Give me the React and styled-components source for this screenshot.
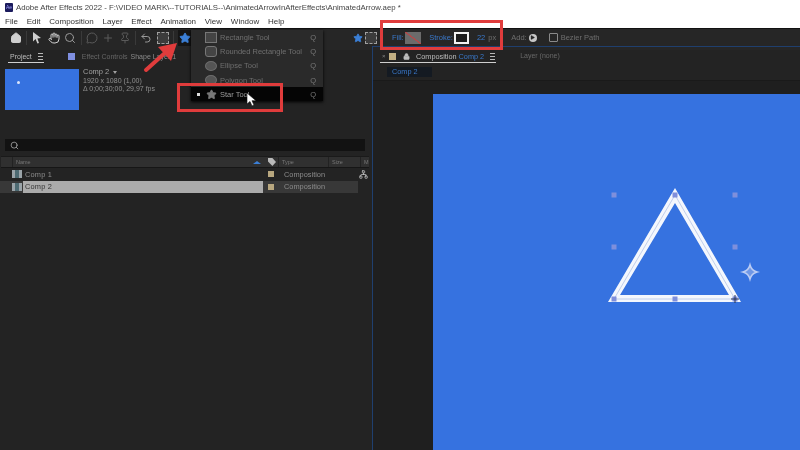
import React from 'react'
import styled, { createGlobalStyle } from 'styled-components'
import { Home, Hand, Search, Undo2, Plus, Pin, MessageCircle, Star, Play, Network, Lock } from 'lucide-react'

const GlobalStyle = createGlobalStyle`
  html, body { margin: 0; padding: 0; background: #232323; }
  body { font-family: "Liberation Sans", Arial, sans-serif; }
`

const Page = styled.div`
  position: relative;
  width: 800px;
  height: 450px;
  overflow: hidden;
  display: flex;
  flex-direction: column;
  background: #232323;
  filter: blur(0.35px);
`

const TitleBar = styled.div`
  height: 14px;
  background: #fff;
  display: flex;
  align-items: center;
  gap: 3px;
  padding-left: 5px;
  font-size: 7.8px;
  color: #444;
  white-space: nowrap;
`

const AppIcon = styled.div`
  width: 8px;
  height: 9px;
  border-radius: 1px;
  background: #1a1a5c;
  color: #a6a6ff;
  font-size: 5px;
  line-height: 9px;
  text-align: center;
`

const MenuBar = styled.div`
  height: 14px;
  background: #fff;
  display: flex;
  align-items: center;
  gap: 8.8px;
  padding-left: 5px;
  font-size: 8px;
  color: #333;
`

const Toolbar = styled.div`
  height: 22px;
  box-sizing: border-box;
  background: #262626;
  border-top: 1px solid #111;
  display: flex;
  align-items: center;
  padding: 0 0 4px 8px;
  color: #9a9a9a;
`

const ToolSlot = styled.div`
  width: ${(p) => p.$w || 16.5}px;
  flex: none;
  display: flex;
  justify-content: center;
  color: ${(p) => (p.$dim ? '#5a5a5a' : p.$light ? '#cfcfcf' : '#9a9a9a')};
`

const ToolSep = styled.div`
  width: 1px;
  height: 14px;
  flex: none;
  margin: 0 2px;
  background: #3a3a3a;
`

const ActiveTool = styled.div`
  width: 14px;
  height: 16px;
  flex: none;
  margin-left: 2px;
  background: #151515;
  display: flex;
  align-items: center;
  justify-content: center;
  color: #3b7fd6;
`

const DashBox = styled.div`
  width: 10px;
  height: 10px;
  border: 1px dashed #a0a0a0;
  background: #3c3c3c;
`

const ToolSpacer = styled.div`
  width: ${(p) => p.$w}px;
  flex: none;
`

const OptionLabel = styled.span`
  font-size: 7.5px;
  flex: none;
  color: ${(p) => (p.$blue ? '#3a78c9' : '#6e6e6e')};
  margin-left: ${(p) => p.$ml || 0}px;
`

const FillSwatch = styled.div`
  width: 16px;
  height: 12px;
  flex: none;
  margin-left: 1.5px;
  background: linear-gradient(to top right, #6b6b6b 46%, #b04a4a 48%, #b04a4a 53%, #6b6b6b 55%);
`

const StrokeSwatch = styled.div`
  width: 15px;
  height: 12px;
  flex: none;
  box-sizing: border-box;
  margin-left: 1px;
  border: 2.5px solid #f2f2f2;
  background: #1c1c1c;
`

const AddDot = styled.div`
  width: 8px;
  height: 8px;
  flex: none;
  margin-left: 2px;
  border-radius: 50%;
  background: #c8c8c8;
  display: flex;
  align-items: center;
  justify-content: center;
  color: #262626;
`

const CheckBox = styled.div`
  width: 9px;
  height: 9px;
  flex: none;
  margin-left: 12px;
  border: 1px solid #8a8a8a;
  border-radius: 1px;
  box-sizing: border-box;
`

const Main = styled.div`
  flex: 1;
  display: flex;
  min-height: 0;
`

const LeftPanel = styled.div`
  width: 372px;
  display: flex;
  flex-direction: column;
  flex: none;
`

const TabRow = styled.div`
  height: 14px;
  display: flex;
  align-items: flex-start;
  font-size: 7px;
`

const Tab = styled.div`
  height: 12px;
  display: flex;
  align-items: center;
  gap: 6px;
  padding: 0 1px 0 2px;
  color: #bdbdbd;
  border-bottom: 1px solid #cfcfcf;
`

const LeftTabRow = styled(TabRow)`
  padding-left: 8px;
`

const EffectTab = styled.div`
  display: flex;
  align-items: center;
  gap: 7px;
  height: 12px;
  margin-left: 24px;
  color: #666;
`

const BrightText = styled.span`
  color: #8a8a8a;
  margin-left: 1px;
`

const Bars = styled.div`
  width: 5px;
  height: 5px;
  flex: none;
  border-top: 1px solid #b8b8b8;
  border-bottom: 1px solid #b8b8b8;
  &::after {
    content: '';
    display: block;
    height: 1px;
    margin-top: 2px;
    background: #b8b8b8;
  }
`

const Square = styled.div`
  width: 7px;
  height: 7px;
  flex: none;
  background: ${(p) => p.$color};
`

const ProjectInfo = styled.div`
  display: flex;
  gap: 4px;
  padding: 5px 0 0 5px;
  height: 69px;
  box-sizing: border-box;
`

const Thumb = styled.div`
  width: 74px;
  height: 41px;
  background: #3672e0;
  position: relative;
  &::after {
    content: '';
    position: absolute;
    left: 12px;
    top: 12px;
    width: 3px;
    height: 3px;
    border-radius: 50%;
    background: #dbe6fb;
  }
`

const CompMeta = styled.div`
  font-size: 7px;
  line-height: 8.7px;
  color: #8f8f8f;
  margin-top: -1px;
`

const CompName = styled.div`
  display: flex;
  align-items: center;
  gap: 4px;
  color: #a0a0a0;
  font-size: 7.5px;
  &::after {
    content: '';
    border-left: 2.5px solid transparent;
    border-right: 2.5px solid transparent;
    border-top: 3px solid #a0a0a0;
  }
`

const SearchField = styled.div`
  height: 12px;
  margin: 6px 7px 0 5px;
  background: #121212;
  display: flex;
  align-items: center;
  padding-left: 5px;
  color: #b0b0b0;
`

const ListHeader = styled.div`
  height: 12px;
  box-sizing: border-box;
  margin: 5px 3px 0 1px;
  background: #303030;
  display: flex;
  align-items: center;
  font-size: 5.5px;
  color: #777;
  border-top: 1px solid #1a1a1a;
  border-bottom: 1px solid #161616;
`

const HeadCell = styled.div`
  width: ${(p) => p.$w}px;
  flex: none;
  box-sizing: border-box;
  padding-left: 3px;
  height: 100%;
  display: flex;
  align-items: center;
  border-left: ${(p) => (p.$plain ? 'none' : '1px solid #222')};
`

const SortMark = styled.div`
  width: 0;
  height: 0;
  margin-left: auto;
  margin-right: 5px;
  border-left: 4px solid transparent;
  border-right: 4px solid transparent;
  border-bottom: 3px solid #3b7fd6;
`

const TagSlot = styled.div`
  width: 12px;
  flex: none;
  display: flex;
  justify-content: center;
`

const TagIcon = styled.div`
  width: 8px;
  height: 8px;
  background: #b9b9b9;
  clip-path: polygon(0 0, 55% 0, 100% 50%, 55% 100%, 0 45%);
`

const Row = styled.div`
  height: 12.5px;
  margin-right: 14px;
  display: flex;
  align-items: center;
  font-size: 7.4px;
  color: #8c8c8c;
  background: ${(p) => (p.$shade ? '#383838' : 'transparent')};
  position: relative;
`

const RowIcon = styled.div`
  width: 10px;
  height: 8px;
  margin: 0 1px 0 12px;
  flex: none;
  background: linear-gradient(to right, #9aa3a8 30%, #4d6a72 30%, #4d6a72 70%, #9aa3a8 70%);
`

const NameCell = styled.div`
  width: 240px;
  flex: none;
  box-sizing: border-box;
  padding-left: 2px;
  height: 100%;
  display: flex;
  align-items: center;
  letter-spacing: 0.2px;
  background: ${(p) => (p.$selected ? '#ababab' : 'transparent')};
  color: ${(p) => (p.$selected ? '#333' : '#8c8c8c')};
`

const LabelChip = styled.div`
  width: 6px;
  height: 6px;
  margin: 0 10px 0 5px;
  flex: none;
  background: #b8a77f;
`

const FlowMark = styled.div`
  position: absolute;
  right: -10px;
  top: 2px;
  color: #c8c8c8;
`

const RightPanel = styled.div`
  flex: 1;
  min-width: 0;
  display: flex;
  flex-direction: column;
  border-left: 1px solid #1f3f6e;
  border-top: 1px solid #1f3f6e;
  margin-top: -4px;
  padding-top: 3px;
`

const ViewerTabs = styled(TabRow)`
  padding-left: 7px;
`

const ViewerTab = styled.div`
  height: 12px;
  display: flex;
  align-items: center;
  padding: 0 1px 0 2px;
  color: #bdbdbd;
  font-size: 7.3px;
  border-bottom: 1px solid #cfcfcf;
`

const CloseMark = styled.span`
  color: #888;
  font-size: 6px;
  width: 4px;
  margin-right: 3px;
`

const BrownChip = styled.div`
  width: 7px;
  height: 7px;
  margin-right: 7px;
  background: #c2b083;
`

const LockSlot = styled.div`
  width: 7px;
  margin-right: 6px;
  display: flex;
  color: #bdbdbd;
`

const BlueText = styled.span`
  color: #3a78c9;
  margin: 0 6px 0 2px;
`

const LayerTab = styled.span`
  margin-left: 24px;
  line-height: 12px;
  color: #686868;
`

const CompCrumbRow = styled.div`
  height: 17px;
  padding: 3px 0 0 14px;
  box-sizing: border-box;
  border-bottom: 1px solid #1a1a1a;
`

const CompCrumb = styled.div`
  width: 45px;
  height: 10px;
  box-sizing: border-box;
  padding-left: 5px;
  font-size: 7.3px;
  line-height: 10px;
  color: #3a78c9;
  background: #141a22;
`

const ViewerBody = styled.div`
  flex: 1;
  padding: 13px 0 0 60px;
  background: #1f1f1f;
  min-height: 0;
`

const Canvas = styled.svg`
  display: block;
  width: 367px;
  height: 356px;
  background: #3672e0;
`

const Dropdown = styled.div`
  position: absolute;
  left: 191px;
  top: 30px;
  width: 132px;
  background: #2a2a2a;
  box-shadow: 0 1px 3px #000;
`

const DropItem = styled.div`
  height: 14.3px;
  display: flex;
  align-items: center;
  font-size: 7.5px;
  white-space: nowrap;
  color: ${(p) => (p.$active ? '#9c9c9c' : '#6f6f6f')};
  background: ${(p) => (p.$active ? '#050505' : 'transparent')};
`

const Bullet = styled.div`
  width: 3px;
  height: 3px;
  margin-left: 6px;
  background: ${(p) => (p.$on ? '#ddd' : 'transparent')};
`

const ShapeSlot = styled.div`
  width: 12px;
  margin: 0 3px 0 5px;
  display: flex;
  justify-content: center;
  color: #777;
`

const ShapeRect = styled.div`
  width: 11px;
  height: 9px;
  background: #444;
  border: 1px solid #777;
  border-radius: ${(p) => p.$r || 0}px;
`

const ShapeEllipse = styled.div`
  width: 12px;
  height: 8px;
  background: #555;
  border: 1px solid #6c6c6c;
  border-radius: 50%;
`

const ItemLabel = styled.span`
  flex: 1;
`

const KeyHint = styled.span`
  margin-right: 7px;
  color: #777;
`

const Callout = styled.div`
  position: absolute;
  box-sizing: border-box;
  border: 3px solid #e03c3c;
`

const StarCallout = styled(Callout)`
  left: 177px;
  top: 83px;
  width: 106px;
  height: 29px;
`

const OptionsCallout = styled(Callout)`
  left: 380px;
  top: 20px;
  width: 123px;
  height: 30px;
`

const ArrowMark = styled.svg`
  position: absolute;
  left: 140px;
  top: 38px;
  width: 42px;
  height: 38px;
`

const CursorMark = styled.svg`
  position: absolute;
  left: 246px;
  top: 93px;
  width: 11px;
  height: 14px;
`

const tools = ['Rectangle Tool', 'Rounded Rectangle Tool', 'Ellipse Tool', 'Polygon Tool']
const handles = [[181, 101], [302, 101], [181, 153], [302, 153], [242, 101], [181, 205], [242, 205], [302, 205]]

const ShapeFor = ({ i }) => {
  if (i === 0) return <ShapeRect />
  if (i === 1) return <ShapeRect $r={3} />
  return <ShapeEllipse />
}

export default function App() {
  return (
    <Page>
      <GlobalStyle />
      <TitleBar>
        <AppIcon>Ae</AppIcon>
        Adobe After Effects 2022 - F:\VIDEO MARK\--TUTORIALS--\AnimatedArrowInAfterEffects\AnimatedArrow.aep *
      </TitleBar>
      <MenuBar>
        {['File', 'Edit', 'Composition', 'Layer', 'Effect', 'Animation', 'View', 'Window', 'Help'].map((m) => (
          <span key={m}>{m}</span>
        ))}
      </MenuBar>
      <Toolbar>
        <ToolSlot $w={16} $light><Home size={12} fill="currentColor" /></ToolSlot>
        <ToolSep />
        <ToolSlot $light>
          <svg width="10" height="12" viewBox="0 0 10 12"><path d="M1 0l8 6-3.6.6L7 11l-1.6.6L3.6 7 1 9.5z" fill="currentColor" /></svg>
        </ToolSlot>
        <ToolSlot $light><Hand size={12} /></ToolSlot>
        <ToolSlot><Search size={12} /></ToolSlot>
        <ToolSep />
        <ToolSlot $dim><MessageCircle size={12} /></ToolSlot>
        <ToolSlot $dim><Plus size={12} /></ToolSlot>
        <ToolSlot $dim><Pin size={12} /></ToolSlot>
        <ToolSep />
        <ToolSlot><Undo2 size={12} /></ToolSlot>
        <ToolSlot><DashBox /></ToolSlot>
        <ToolSep />
        <ActiveTool><Star size={12} fill="currentColor" /></ActiveTool>
        <ToolSpacer $w={159} />
        <ToolSlot $w={13}><Star size={10} fill="#3b7fd6" color="#3b7fd6" /></ToolSlot>
        <ToolSlot $w={13}><DashBox /></ToolSlot>
        <ToolSpacer $w={15} />
        <OptionLabel $blue>Fill:</OptionLabel>
        <FillSwatch />
        <OptionLabel $blue $ml={8}>Stroke:</OptionLabel>
        <StrokeSwatch />
        <OptionLabel $blue $ml={8}>22</OptionLabel>
        <OptionLabel $ml={3}>px</OptionLabel>
        <OptionLabel $ml={15}>Add:</OptionLabel>
        <AddDot><Play size={5} fill="currentColor" /></AddDot>
        <CheckBox />
        <OptionLabel $ml={3}>Bezier Path</OptionLabel>
      </Toolbar>
      <Main>
        <LeftPanel>
          <LeftTabRow>
            <Tab>Project <Bars /></Tab>
            <EffectTab>
              <Square $color="#7f8fe0" />
              <span>Effect Controls <BrightText>Shape Layer 1</BrightText></span>
            </EffectTab>
          </LeftTabRow>
          <ProjectInfo>
            <Thumb />
            <CompMeta>
              <CompName>Comp 2</CompName>
              <div>1920 x 1080 (1,00)</div>
              <div>Δ 0;00;30;00, 29,97 fps</div>
            </CompMeta>
          </ProjectInfo>
          <SearchField><Search size={9} /></SearchField>
          <ListHeader>
            <HeadCell $w={11} $plain />
            <HeadCell $w={254}>Name<SortMark /></HeadCell>
            <TagSlot><TagIcon /></TagSlot>
            <HeadCell $w={50}>Type</HeadCell>
            <HeadCell $w={32}>Size</HeadCell>
            <HeadCell $w={9}>M</HeadCell>
          </ListHeader>
          <Row>
            <RowIcon />
            <NameCell>Comp 1</NameCell>
            <LabelChip />
            <span>Composition</span>
            <FlowMark><Network size={9} /></FlowMark>
          </Row>
          <Row $shade>
            <RowIcon />
            <NameCell $selected>Comp 2</NameCell>
            <LabelChip />
            <span>Composition</span>
          </Row>
        </LeftPanel>
        <RightPanel>
          <ViewerTabs>
            <ViewerTab>
              <CloseMark>×</CloseMark>
              <BrownChip />
              <LockSlot><Lock size={7} fill="currentColor" /></LockSlot>
              Composition <BlueText>Comp 2</BlueText>
              <Bars />
            </ViewerTab>
            <LayerTab>Layer (none)</LayerTab>
          </ViewerTabs>
          <CompCrumbRow><CompCrumb>Comp 2</CompCrumb></CompCrumbRow>
          <ViewerBody>
            <Canvas viewBox="0 0 367 356">
              <path d="M242 94 L308 208 L175 208 Z M242 109 L187 201 L296 201 Z" fill="#f4f7fd" fillRule="evenodd" />
              <path d="M242 101 L302 205 L181 205 Z" fill="none" stroke="#b4c4e6" strokeWidth="0.8" />
              {handles.map(([x, y]) => (
                <rect key={x + '-' + y} x={x - 2.5} y={y - 2.5} width="5" height="5" fill="#7f8fdc" />
              ))}
              <path d="M298 205h8M302 201v8" stroke="#2b3550" strokeWidth="1" />
              <path d="M317 171 q1.5 5.5 7 7 q-5.5 1.5 -7 7 q-1.5 -5.5 -7 -7 q5.5 -1.5 7 -7z" fill="#6f97e6" stroke="#bccdf4" strokeWidth="1.6" />
            </Canvas>
          </ViewerBody>
        </RightPanel>
      </Main>
      <Dropdown>
        {tools.map((t, i) => (
          <DropItem key={t}>
            <Bullet />
            <ShapeSlot><ShapeFor i={i} /></ShapeSlot>
            <ItemLabel>{t}</ItemLabel>
            <KeyHint>Q</KeyHint>
          </DropItem>
        ))}
        <DropItem $active>
          <Bullet $on />
          <ShapeSlot><Star size={11} fill="currentColor" /></ShapeSlot>
          <ItemLabel>Star Tool</ItemLabel>
          <KeyHint>Q</KeyHint>
        </DropItem>
      </Dropdown>
      <StarCallout />
      <OptionsCallout />
      <ArrowMark viewBox="0 0 42 38">
        <path d="M6 32 L26 14" stroke="#e03c3c" strokeWidth="4" strokeLinecap="round" />
        <path d="M37 5 L18 9 L31 23 Z" fill="#e03c3c" />
      </ArrowMark>
      <CursorMark viewBox="0 0 11 14">
        <path d="M1 0v11l3-2.5 2 4.5 2-1-2-4.3h4z" fill="#fff" stroke="#111" strokeWidth="0.6" />
      </CursorMark>
    </Page>
  )
}
